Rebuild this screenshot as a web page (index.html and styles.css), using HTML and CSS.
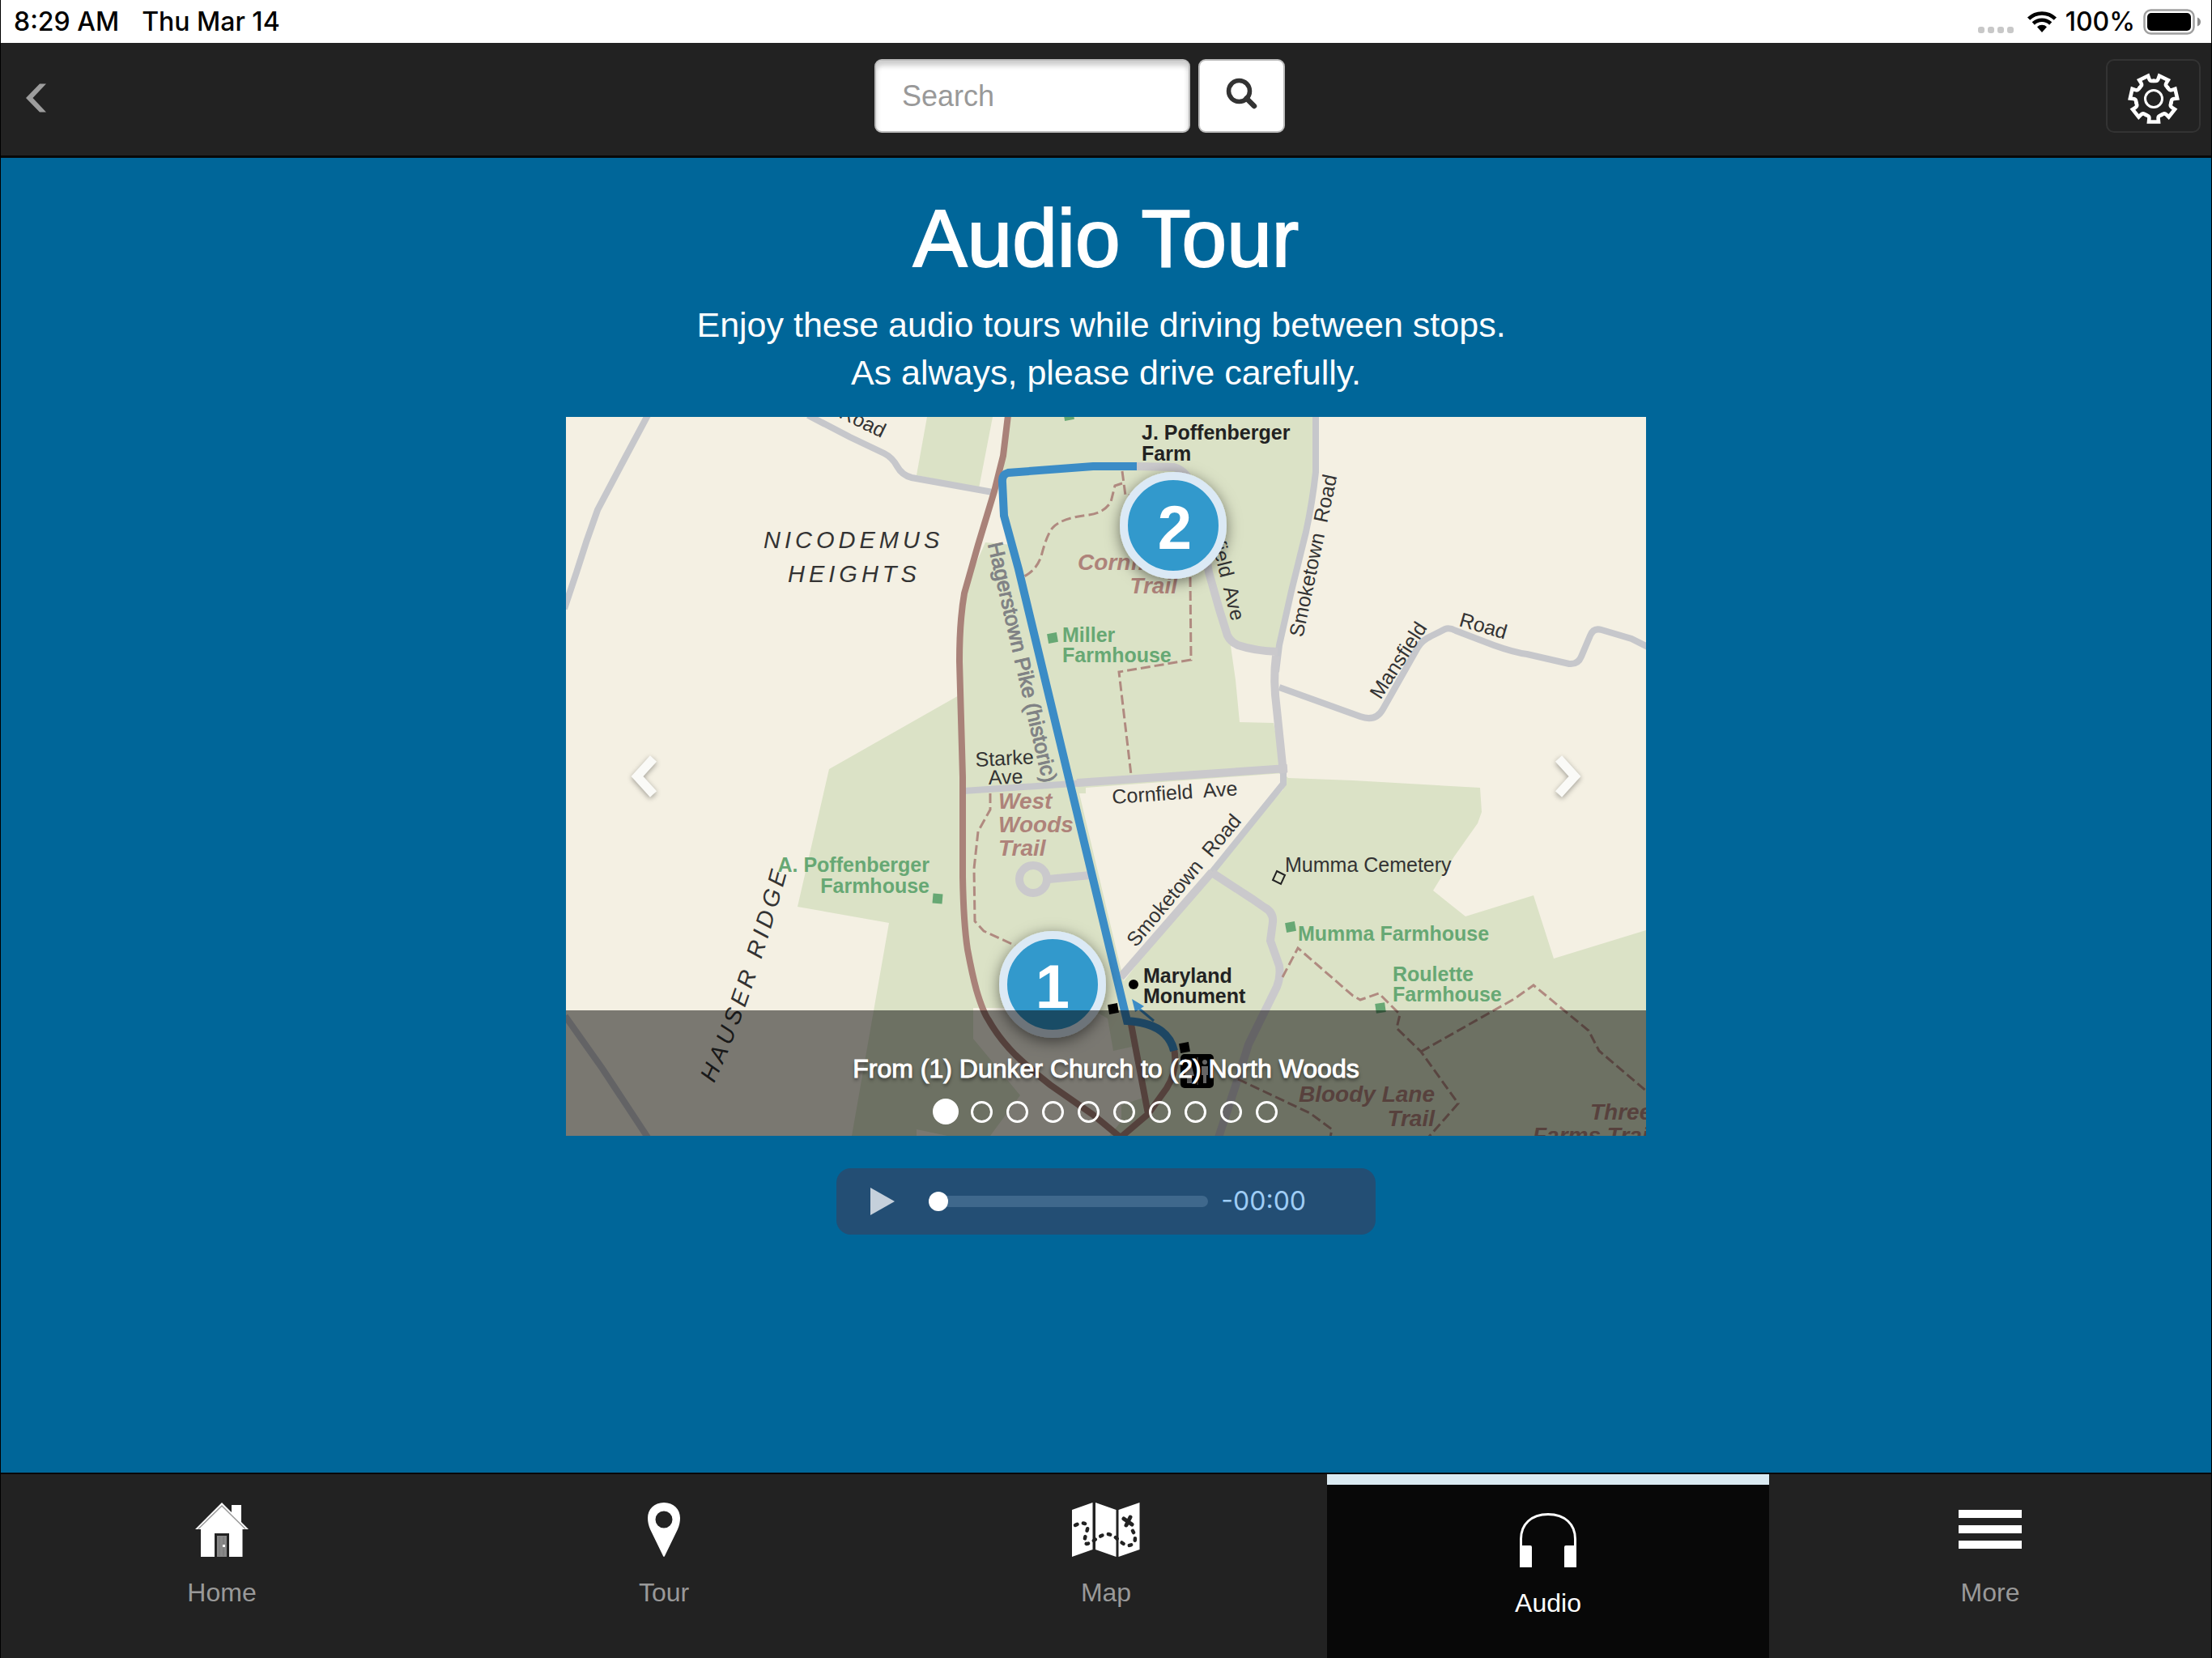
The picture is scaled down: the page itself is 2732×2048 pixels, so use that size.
FILE: index.html
```html
<!DOCTYPE html>
<html lang="en">
<head>
<meta charset="utf-8">
<meta name="viewport" content="width=device-width, initial-scale=1">
<title>Audio Tour</title>
<link rel="stylesheet" href="styles.css">
</head>
<body>
<div class="status">
  <div class="status-group status-left"><span>8:29 AM</span><span>Thu Mar 14</span></div>
  <div class="status-group status-right">
    <svg class="cell" width="44" height="8" viewBox="0 0 44 8" aria-hidden="true"><g fill="#c8c8c8"><rect width="8" height="8" rx="3"/><rect x="12" width="8" height="8" rx="3"/><rect x="24" width="8" height="8" rx="3"/><rect x="36" width="8" height="8" rx="3"/></g></svg>
    <svg width="38" height="28" viewBox="0 0 38 28" aria-hidden="true"><g fill="none" stroke="#000" stroke-width="4.6"><path d="M2.600 10.200a23.500 23.500 0 0 1 32.800 0"/><path d="M8.300 16a15.400 15.400 0 0 1 21.400 0"/></g><path d="M13 20.200a8.700 8.700 0 0 1 12 0l-6 6.800z"/></svg>
    <span>100%</span>
    <svg width="72" height="32" viewBox="0 0 72 32" aria-hidden="true"><rect x="1.500" y="1.500" width="61" height="29" rx="8" fill="#fff" stroke="#a0a0a0" stroke-width="2.500"/><rect x="5" y="5" width="54" height="22" rx="5"/><path d="M67 10.500q4 1.500 4 5.500t-4 5.500z" fill="#8c8c8c"/></svg>
  </div>
</div>

<header class="topbar">
  <button class="back" type="button" aria-label="Back">
    <svg width="26" height="36" viewBox="0 0 26 36"><path d="M17 .5h8L8.500 18 25 35.500h-8L0 18z" fill="#9d9d9d"/></svg>
  </button>
  <form class="search" role="search">
    <input class="search-box" type="search" placeholder="Search" aria-label="Search">
    <button class="search-go" type="button" aria-label="Search">
      <svg width="40" height="40" viewBox="0 0 40 40"><circle cx="16.500" cy="16.500" r="13" fill="none" stroke="#333" stroke-width="5.500"/><path d="M25.500 25.500l9.500 9.500" stroke="#333" stroke-width="6.500" stroke-linecap="round"/></svg>
    </button>
  </form>
  <button class="settings" type="button" aria-label="Settings">
    <svg width="64" height="64" viewBox="-32 -32 64 64">
      <defs><path id="tooth" d="M-9.600 19.900L-7.500 20.800Q-5.300 21.600 -5.600 24.500L-6 28.500H6L5.600 24.500Q5.300 21.600 7.500 20.800L9.600 19.900"/></defs>
      <g fill="none" stroke="#fff" stroke-width="4.600" stroke-linecap="round">
        <use href="#tooth"/><use href="#tooth" transform="rotate(51.430)"/><use href="#tooth" transform="rotate(102.860)"/><use href="#tooth" transform="rotate(154.290)"/><use href="#tooth" transform="rotate(205.710)"/><use href="#tooth" transform="rotate(257.140)"/><use href="#tooth" transform="rotate(308.570)"/>
        <circle r="10.500" stroke-width="3"/>
      </g>
    </svg>
  </button>
</header>

<main class="content">
  <h1 class="title">Audio Tour</h1>
  <p class="intro">Enjoy these audio tours while driving between stops.&nbsp;<br>As always, please drive carefully.</p>

  <section class="carousel" aria-label="Tour segments">
    <svg class="map" viewBox="699 515 1334 888" role="img" aria-label="Map of the route">
      <defs>
        <filter id="pin-shadow" x="-40%" y="-40%" width="180%" height="180%"><feDropShadow dx="0" dy="4" stdDeviation="9" flood-color="#000" flood-opacity=".5"/></filter>
        <path id="ridge" d="M882 1338Q928 1240 974 1070"/>
      </defs>
      <rect class="land" x="699" y="515" width="1334" height="888"/>
      <!-- parkland -->
      <path class="park" d="M1145 515H1226L1209 603L1132 587Z"/>
      <path class="park" d="M1247 515H1625V583L1595 730L1578 800L1573 893L1585 955L1591 961L1671 964L1828 973L1830 1003L1825 1017L1796 1058L1770 1100L1810 1132L1894 1106L1919 1184L2033 1149V1403H1052L1098 1140L985 1120L1024 950L1186 858V740L1217 670L1250 673L1240 637L1238 590Z"/>
      <path class="land" d="M1520 798L1526 840L1531 892L1573 893L1574 805Z"/>
      <path class="land" d="M1333 980H1341V973L1585 955V975L1490 1080L1388 1212Z"/>
      <path class="land" d="M1202 1245H1345L1368 1258L1375 1298L1398 1293L1412 1356L1385 1365V1385L1370 1403H1223L1260 1353L1202 1283Z"/>
      <path class="land" d="M1132 1395L1170 1403H1132Z"/>
      <!-- roads -->
      <g class="road">
        <path d="M800 513L768 573L738 630Q724 668 712 707L697 752"/>
        <path d="M998 513L1050 540L1092 560Q1102 565 1108 576Q1114 587 1126 590L1226 608"/>
        <path d="M698 1255L744 1320L800 1405"/>
        <path d="M1580 849L1680 885Q1699 892 1708 876L1751 800Q1756 791 1767 786L1785 777Q1790 775 1798 779L1845 797Q1870 806 1886 808L1938 820Q1949 821 1953 811L1964 785Q1968 775 1978 778L2015 789L2035 799"/>
        <path d="M1625 513V583Q1621 620 1613 657L1595 730L1580 797L1576 830"/>
        <path d="M1585 953V968L1497 1077"/>
        <path d="M1190 977L1340 967"/>
      </g>
      <g class="road wide">
        <path d="M1576 810Q1572 840 1577 877L1585 955"/>
        <path d="M1400 576L1450 577Q1478 584 1484 650L1493 707L1506 753L1516 785Q1520 793 1529 797Q1550 804 1578 805"/>
        <path d="M1330 967L1590 949"/>
        <path d="M1497 1077L1384 1207"/>
        <path d="M1497 1078L1546 1110L1562 1121Q1573 1127 1572 1139L1569 1162L1580 1193Q1582 1206 1577 1219L1542 1290L1528 1335L1505 1405"/>
        <path d="M1295 1086L1347 1081"/>
        <circle cx="1276" cy="1086" r="17"/>
      </g>
      <path class="pike" d="M1245 513L1239 563L1228 607L1208 673L1191 733Q1185 767 1185 817L1189 960V1083Q1190 1140 1195 1173Q1201 1205 1206 1223Q1214 1250 1221 1260Q1234 1283 1254 1303Q1275 1323 1297 1340L1350 1377L1384 1405"/>
      <path class="pike" d="M1397 1265L1418 1376M1450 1295Q1455 1322 1441 1344L1418 1376L1384 1405"/>
      <!-- trails -->
      <g class="trail">
        <path d="M1386 582L1390 612H1410"/>
        <path d="M1386 597L1377 600L1372 620Q1363 634 1345 636Q1310 640 1300 652Q1293 660 1286 687Q1280 705 1263 713"/>
        <path d="M1470 713L1471 815L1382 830L1397 957"/>
        <path d="M1223 980V1000L1208 1027L1203 1073L1204 1138L1215 1150L1254 1168"/>
        <path d="M1584 1207L1603 1171L1671 1230L1680 1235L1703 1227L1729 1253L1725 1270L1755 1299L1801 1363L1764 1405"/>
        <path d="M1755 1299L1870 1234L1894 1217L1962 1273L1975 1298L2035 1349"/>
        <path d="M1529 1333L1618 1375L1645 1395L1643 1405"/>
      </g>
      <path class="route" d="M1404 576H1350L1245 584Q1237 586 1238 596L1240 637L1258 703L1392 1261Q1442 1264 1450 1298"/>
      <g fill="#3b8cc6"><path d="M1398 1234L1413 1243L1402 1250Z"/><path d="M1407 1246L1425 1261" fill="none" stroke="#3b8cc6" stroke-width="3"/></g>
      <!-- landmarks -->
      <g class="farm">
        <rect x="-6" y="-6" width="12" height="12" transform="translate(1300 788) rotate(-10)"/>
        <rect x="-6" y="-6" width="12" height="12" transform="translate(1320 513) rotate(-10)"/>
        <rect x="-6" y="-6" width="12" height="12" transform="translate(1158 1110) rotate(5)"/>
        <rect x="-6" y="-6" width="12" height="12" transform="translate(1594 1145) rotate(-10)"/>
        <rect x="-6" y="-6" width="12" height="12" transform="translate(1705 1245) rotate(-8)"/>
      </g>
      <rect x="-6" y="-6" width="12" height="12" transform="translate(1375 1246) rotate(-10)"/>
      <rect x="-6" y="-6" width="12" height="12" transform="translate(1463 1294) rotate(-10)"/>
      <circle cx="1400" cy="1216" r="6"/>
      <path d="M1577 1076L1587 1081L1582 1092L1572 1087Z" fill="none" stroke="#222" stroke-width="2"/>
      <rect x="1458" y="1302" width="41" height="42" rx="5"/>
      <g fill="#ccc"><circle cx="1469" cy="1312" r="3"/><path d="M1466 1317h6l3 12h-3v9h-6v-9h-3z"/><circle cx="1488" cy="1312" r="3"/><path d="M1484 1317h8v11h-2v10h-4v-10h-2z"/></g>
      <path d="M1479 1306V1340" stroke="#ccc"/>
      <!-- labels -->
      <g class="place">
        <text x="1410" y="543">J. Poffenberger</text><text x="1410" y="569">Farm</text>
        <text x="1412" y="1214">Maryland</text><text x="1412" y="1239">Monument</text>
      </g>
      <g class="place farm">
        <text x="1312" y="793">Miller</text><text x="1312" y="818">Farmhouse</text>
        <text x="1148" y="1077" text-anchor="end">A. Poffenberger</text><text x="1148" y="1103" text-anchor="end">Farmhouse</text>
        <text x="1603" y="1162">Mumma Farmhouse</text>
        <text x="1720" y="1212">Roulette</text><text x="1720" y="1237">Farmhouse</text>
      </g>
      <g class="trail-name">
        <text x="1454" y="704" text-anchor="end">Cornfield</text><text x="1454" y="733" text-anchor="end">Trail</text>
        <text x="1233" y="999">West</text><text x="1233" y="1028">Woods</text><text x="1233" y="1057">Trail</text>
        <text x="1772" y="1361" text-anchor="end">Bloody Lane</text><text x="1772" y="1391" text-anchor="end">Trail</text>
        <text x="1964" y="1383">Three</text><text x="1893" y="1412">Farms Trail</text>
      </g>
      <g class="street">
        <text transform="translate(1035 515) rotate(26)">Road</text>
        <text transform="translate(1205 947) rotate(-3)">Starke</text>
        <text transform="translate(1221 969) rotate(-2)">Ave</text>
        <text transform="translate(1374 993) rotate(-4)">Cornfield&nbsp; Ave</text>
        <text transform="translate(1521 768) rotate(76)" text-anchor="end">Cornfield&nbsp; Ave</text>
        <text transform="translate(1609 788) rotate(-78)">Smoketown&nbsp; Road</text>
        <text transform="translate(1403 1171) rotate(-50)">Smoketown&nbsp; Road</text>
        <text transform="translate(1705 865) rotate(-57)">Mansfield</text>
        <text transform="translate(1801 773) rotate(16)">Road</text>
        <text x="1587" y="1077">Mumma Cemetery</text>
      </g>
      <text class="historic" transform="translate(1220 672) rotate(77)">Hagerstown Pike (historic)</text>
      <g class="region">
        <text x="943" y="677">NICODEMUS</text><text x="973" y="719">HEIGHTS</text>
        <text><textPath href="#ridge">HAUSER RIDGE</textPath></text>
      </g>
      <!-- numbered stops -->
      <g class="stop">
        <circle cx="1449" cy="649" r="61" filter="url(#pin-shadow)"/><text x="1451" y="678">2</text>
        <circle cx="1300" cy="1216" r="61" filter="url(#pin-shadow)"/><text x="1300" y="1245">1</text>
      </g>
    </svg>
    <button class="arrow arrow-prev" type="button" aria-label="Previous">
      <svg width="40" height="56" viewBox="0 0 40 56"><path d="M32 6L12 28L32 50" fill="none" stroke="#fafaf7" stroke-width="11"/></svg>
    </button>
    <button class="arrow arrow-next" type="button" aria-label="Next">
      <svg width="40" height="56" viewBox="0 0 40 56"><path d="M8 6L28 28L8 50" fill="none" stroke="#fafaf7" stroke-width="11"/></svg>
    </button>
    <div class="caption">
      <p class="caption-text">From (1) Dunker Church to (2) North Woods</p>
      <div class="dots">
        <button class="dot dot-active" type="button" aria-label="Slide 1"></button>
        <button class="dot" type="button" aria-label="Slide 2"></button>
        <button class="dot" type="button" aria-label="Slide 3"></button>
        <button class="dot" type="button" aria-label="Slide 4"></button>
        <button class="dot" type="button" aria-label="Slide 5"></button>
        <button class="dot" type="button" aria-label="Slide 6"></button>
        <button class="dot" type="button" aria-label="Slide 7"></button>
        <button class="dot" type="button" aria-label="Slide 8"></button>
        <button class="dot" type="button" aria-label="Slide 9"></button>
        <button class="dot" type="button" aria-label="Slide 10"></button>
      </div>
    </div>
  </section>

  <div class="player">
    <button class="play" type="button" aria-label="Play">
      <svg width="30" height="34" viewBox="0 0 30 34"><path d="M0 0L30 17L0 34Z" fill="#c5d0db"/></svg>
    </button>
    <input class="seek" type="range" min="0" max="100" value="0" aria-label="Position">
    <span class="time">-00:00</span>
  </div>
</main>

<nav class="tabs">
  <a class="tab" href="#home">
    <svg width="68" height="67" viewBox="0 0 68 67"><path fill="#fff" d="M34 0L46 12V3H58V24L67 33H59.500V67H8V33H1Z"/><path d="M5 32.500L34 4L63 32.500" fill="none" stroke="#999" stroke-width="1.500"/><path d="M25 67V38H43V67Z" fill="#222"/><path d="M28 67V41H40V67Z" fill="#888"/><path d="M31 42V66M36 42V66" stroke="#777"/><rect x="35" y="52" width="3" height="3" fill="#fff"/></svg>
    <span>Home</span>
  </a>
  <a class="tab" href="#tour">
    <svg width="42" height="67" viewBox="0 0 42 67"><path fill="#fff" fill-rule="evenodd" d="M21 0C33 0 41 8.500 41 19C41 24 40 28 38 33L22 66Q21 68 20 66L4 33C2 28 1 24 1 19C1 8.500 9 0 21 0ZM21 10.500A10.500 10.500 0 1 0 21 31.500A10.500 10.500 0 1 0 21 10.500Z"/></svg>
    <span>Tour</span>
  </a>
  <a class="tab" href="#map">
    <svg width="84" height="67" viewBox="0 0 84 67"><path fill="#fff" d="M0 9L25.500 0V58L0 67ZM29 0L54.500 9V67L29 58ZM57.500 9L83.500 0V58L57.500 67Z"/><g fill="none" stroke="#222" stroke-width="4.500" stroke-linecap="round"><path stroke-dasharray="2.500 7.500" d="M4 28C14 23 21 26 19 33C17 41 13 50 18 51C26 50 33 40 43 39C55 39 59 52 70 53C80 52 80 41 73 32"/><path stroke-width="5" d="M64 20L74 27M72 18L67 28"/></g></svg>
    <span>Map</span>
  </a>
  <a class="tab tab-active" href="#audio" aria-current="page">
    <svg width="70" height="67" viewBox="0 0 70 67"><path d="M1.500 44V32C1.500 14 14 1.500 35 1.500S68.500 14 68.500 32V44" fill="none" stroke="#fff" stroke-width="3"/><path fill="#fff" d="M0 40H13Q15 40 15 42V67H0ZM70 40H57Q55 40 55 42V67H70Z"/></svg>
    <span>Audio</span>
  </a>
  <a class="tab" href="#more">
    <svg width="78" height="67" viewBox="0 0 78 67"><path fill="#fff" d="M0 9H78V19H0ZM0 28H78V38H0ZM0 47H78V57H0Z"/></svg>
    <span>More</span>
  </a>
</nav>
</body>
</html>
```
FILE: styles.css
```css
*, *::before { box-sizing: border-box; }

body {
  margin: 0;
  min-height: 100vh;
  display: flex;
  flex-direction: column;
  border: solid #000;
  border-width: 0 1px;
  background: #069;
  color: #fff;
  font-family: "Liberation Sans", Arial, sans-serif;
}

button {
  margin: 0;
  padding: 0;
  border: 0;
  background: none;
  font: inherit;
}

svg { display: block; }

/* Status bar */
.status {
  display: flex;
  justify-content: space-between;
  align-items: center;
  height: 53px;
  padding: 0 12px 0 16px;
  background: #fff;
  color: #000;
  font: 500 32px/53px Inter, sans-serif;
}
.status-group { display: flex; align-items: center; }
.status-left { gap: 28px; }
.status-right { gap: 10px; }
.cell { margin-top: 20px; margin-right: 6px; }

/* Top bar */
.topbar {
  display: flex;
  justify-content: space-between;
  align-items: center;
  padding: 20px 13px 28px 21px;
  background: #222;
  border-bottom: 3px solid #080808;
}
.back {
  display: flex;
  align-items: center;
  width: 44px;
  height: 91px;
  padding: 4px 0 0 10px;
}
.search { display: flex; gap: 10px; }
.search-box {
  width: 390px;
  height: 91px;
  padding: 0 32px;
  border: 2px solid #bbb;
  border-radius: 9px;
  background: #fff;
  box-shadow: inset 0 6px 6px rgba(0, 0, 0, .2);
  font: 36px "Liberation Sans", Arial, sans-serif;
  color: #333;
  appearance: none;
}
.search-box::placeholder { color: #999; }
.search-go {
  display: flex;
  justify-content: center;
  align-items: center;
  width: 107px;
  height: 91px;
  padding-bottom: 6px;
  border: 2px solid #bbb;
  border-radius: 9px;
  background: #fff;
}
.settings {
  display: flex;
  justify-content: center;
  align-items: center;
  width: 117px;
  height: 91px;
  padding-top: 6px;
  border: 2px solid #333;
  border-radius: 10px;
}

/* Page content */
.content {
  flex: 1;
  display: flex;
  flex-direction: column;
  align-items: center;
  padding: 45px 20px;
}
.title {
  margin: 0 0 24px;
  font-size: 100px;
  font-weight: 400;
  line-height: 108px;
  -webkit-text-stroke: 2px #fff;
}
.intro {
  margin: 0 0 25px;
  font-size: 43px;
  line-height: 59px;
  text-align: center;
}

/* Map carousel */
.carousel {
  position: relative;
  width: 100%;
  max-width: 1334px;
  overflow: hidden;
}
.map { width: 100%; height: auto; }
.land { fill: #f4f0e3; }
.park { fill: #dbe2c6; }
.road { fill: none; stroke: #c6c7cb; stroke-width: 8; }
.wide { stroke: #cac9cc; stroke-width: 10; }
.pike { fill: none; stroke: #a98279; stroke-width: 8; }
.trail { fill: none; stroke: #b08a80; stroke-width: 3; stroke-dasharray: 12 5; }
.route { fill: none; stroke: #3b8cc6; stroke-width: 10; }
.farm { fill: #67a874; }
.place { font-size: 25px; font-weight: 700; }
.place:not(.farm) { fill: #222; }
.trail-name { font-size: 28px; font-weight: 700; font-style: italic; fill: #ae837a; }
.street { font-size: 25px; fill: #333; }
.historic { font-size: 26px; fill: #808285; stroke: #808285; }
.region { font-size: 29px; font-style: italic; letter-spacing: 5px; fill: #333; }
.stop circle { fill: #39c; stroke: #dbe9f5; stroke-width: 10; }
.stop text { font-size: 76px; font-weight: 700; fill: #fff; text-anchor: middle; }

.arrow {
  position: absolute;
  top: 50%;
  transform: translateY(-50%);
  filter: drop-shadow(0 2px 3px rgba(0, 0, 0, .35));
}
.arrow-prev { left: 76px; }
.arrow-next { right: 76px; }

.caption {
  position: absolute;
  inset: auto 0 0;
  height: 155px;
  padding-top: 52px;
  background: rgba(0, 0, 0, .5);
  text-align: center;
}
.caption-text {
  margin: 0 0 13px;
  font-size: 32px;
  line-height: 40px;
  text-shadow: 0 3px 4px rgba(0, 0, 0, .6);
  -webkit-text-stroke: 1px #fff;
}
.dots { display: flex; justify-content: center; }
.dot {
  display: flex;
  justify-content: center;
  align-items: center;
  width: 44px;
  height: 40px;
}
.dot::before {
  content: "";
  width: 27px;
  height: 27px;
  border: 3px solid #fff;
  border-radius: 50%;
}
.dot-active::before { width: 32px; height: 32px; background: #fff; }

/* Audio player */
.player {
  display: flex;
  align-items: center;
  width: 100%;
  max-width: 666px;
  height: 82px;
  margin-top: 40px;
  padding: 0 86px 0 42px;
  border-radius: 18px;
  background: #234e74;
}
.play { margin-right: 42px; }
.seek {
  flex: 1;
  min-width: 0;
  height: 24px;
  margin: 0 16px 0 0;
  background: none;
  appearance: none;
}
.seek::-webkit-slider-runnable-track {
  height: 14px;
  border-radius: 7px;
  background: #3f688c;
}
.seek::-webkit-slider-thumb {
  width: 24px;
  height: 24px;
  margin-top: -5px;
  border-radius: 50%;
  background: #fff;
  appearance: none;
}
.time { font: 32px/40px Inter, sans-serif; color: #9fcdf5; }

/* Bottom tabs */
.tabs {
  display: grid;
  grid-template-columns: repeat(5, 1fr);
  height: 229px;
  border-top: 2px solid #080808;
  background: #222;
}
.tab {
  display: flex;
  flex-direction: column;
  align-items: center;
  gap: 24px;
  padding-top: 35px;
  color: #999;
  font-size: 32px;
  line-height: 40px;
  text-decoration: none;
}
.tab-active {
  border-top: 13px solid #daeaf2;
  background: #080808;
  color: #fff;
}
```
